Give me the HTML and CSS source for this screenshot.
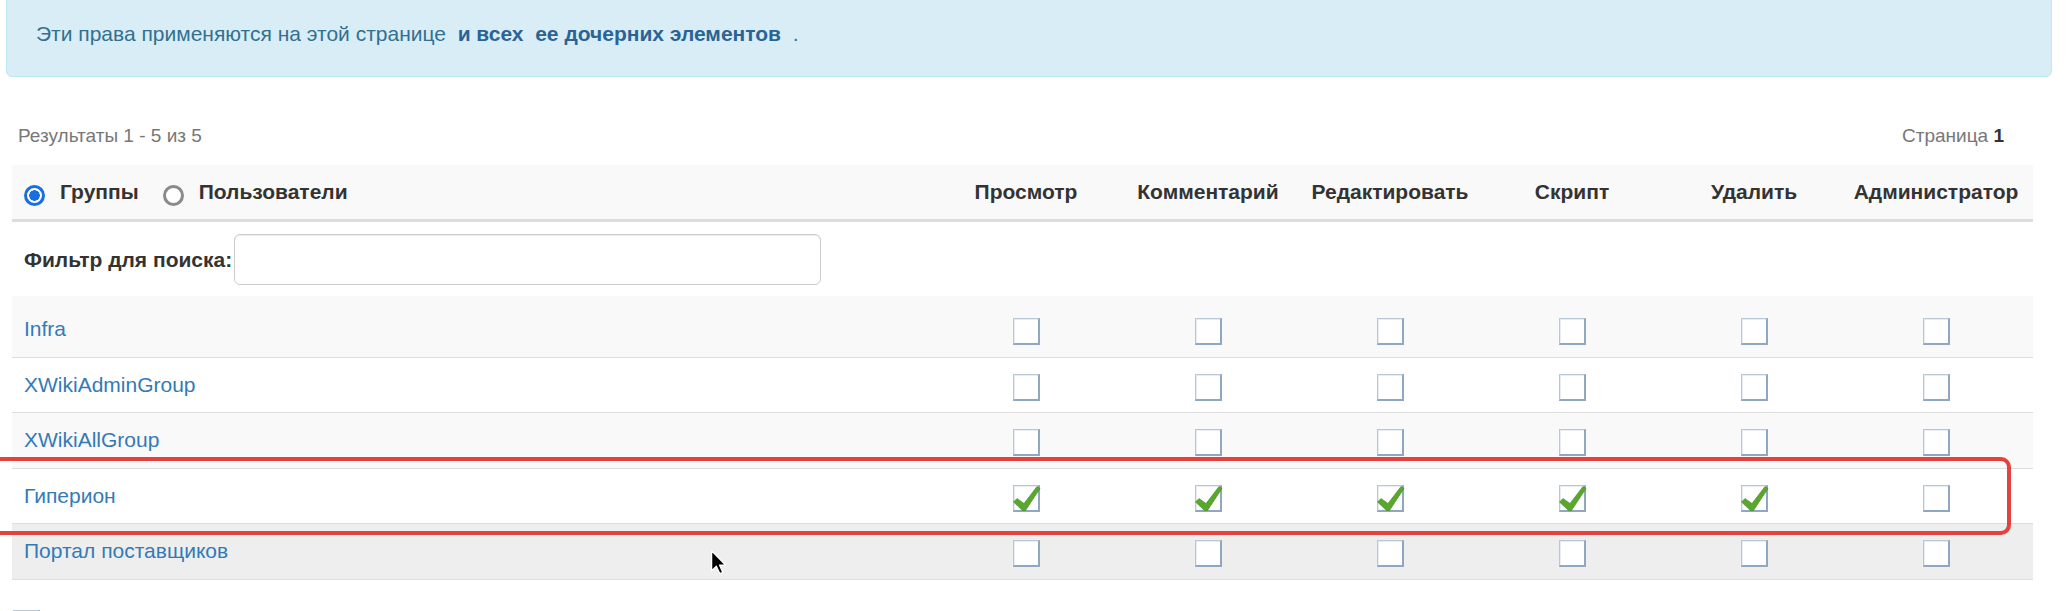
FILE: index.html
```html
<!DOCTYPE html>
<html>

	<head>
		<meta charset="UTF-8">
		<title>Права</title>
		<link rel="stylesheet" href="styles.css">
	</head>

	<body>
		<div class="alert">
			Эти права применяются на этой странице&nbsp; <b>и всех&nbsp; ее дочерних элементов</b>&nbsp; .
		</div>

		<div class="results">
			<span>Результаты 1 - 5 из 5</span>
			<span>Страница <b>1</b></span>
		</div>

		<div class="rights">
			<div class="row head">
				<div class="cell scope">
					<span class="radio on"></span><span class="scope-name">Группы</span><span class="radio"></span><span class="scope-name">Пользователи</span>
				</div>
				<div class="cell title">Просмотр</div>
				<div class="cell title">Комментарий</div>
				<div class="cell title">Редактировать</div>
				<div class="cell title">Скрипт</div>
				<div class="cell title">Удалить</div>
				<div class="cell title">Администратор</div>
			</div>

			<div class="filter">
				<label>Фильтр для поиска:</label>
				<input type="text">
			</div>

			<div class="row odd first">
				<div class="cell name"><a href="#">Infra</a></div>
				<div class="cell box"><span class="check"></span></div>
				<div class="cell box"><span class="check"></span></div>
				<div class="cell box"><span class="check"></span></div>
				<div class="cell box"><span class="check"></span></div>
				<div class="cell box"><span class="check"></span></div>
				<div class="cell box"><span class="check"></span></div>
			</div>

			<div class="row">
				<div class="cell name"><a href="#">XWikiAdminGroup</a></div>
				<div class="cell box"><span class="check"></span></div>
				<div class="cell box"><span class="check"></span></div>
				<div class="cell box"><span class="check"></span></div>
				<div class="cell box"><span class="check"></span></div>
				<div class="cell box"><span class="check"></span></div>
				<div class="cell box"><span class="check"></span></div>
			</div>

			<div class="row odd">
				<div class="cell name"><a href="#">XWikiAllGroup</a></div>
				<div class="cell box"><span class="check"></span></div>
				<div class="cell box"><span class="check"></span></div>
				<div class="cell box"><span class="check"></span></div>
				<div class="cell box"><span class="check"></span></div>
				<div class="cell box"><span class="check"></span></div>
				<div class="cell box"><span class="check"></span></div>
			</div>

			<div class="row">
				<div class="cell name"><a href="#">Гиперион</a></div>
				<div class="cell box"><span class="check"><svg class="tick" viewBox="0 0 27 27"><path d="M0.5 17 L4 13.5 L11 18.5 L24 1.5 L27 3.5 L12.5 25.5 L9.5 25.5 Z"/></svg></span></div>
				<div class="cell box"><span class="check"><svg class="tick" viewBox="0 0 27 27"><path d="M0.5 17 L4 13.5 L11 18.5 L24 1.5 L27 3.5 L12.5 25.5 L9.5 25.5 Z"/></svg></span></div>
				<div class="cell box"><span class="check"><svg class="tick" viewBox="0 0 27 27"><path d="M0.5 17 L4 13.5 L11 18.5 L24 1.5 L27 3.5 L12.5 25.5 L9.5 25.5 Z"/></svg></span></div>
				<div class="cell box"><span class="check"><svg class="tick" viewBox="0 0 27 27"><path d="M0.5 17 L4 13.5 L11 18.5 L24 1.5 L27 3.5 L12.5 25.5 L9.5 25.5 Z"/></svg></span></div>
				<div class="cell box"><span class="check"><svg class="tick" viewBox="0 0 27 27"><path d="M0.5 17 L4 13.5 L11 18.5 L24 1.5 L27 3.5 L12.5 25.5 L9.5 25.5 Z"/></svg></span></div>
				<div class="cell box"><span class="check"></span></div>
			</div>

			<div class="row hover last">
				<div class="cell name"><a href="#">Портал поставщиков</a></div>
				<div class="cell box"><span class="check"></span></div>
				<div class="cell box"><span class="check"></span></div>
				<div class="cell box"><span class="check"></span></div>
				<div class="cell box"><span class="check"></span></div>
				<div class="cell box"><span class="check"></span></div>
				<div class="cell box"><span class="check"></span></div>
			</div>
		</div>

		<div class="foot"><span class="check"></span></div>

		<!-- red marker round the row -->
		<div class="marker"></div>

		<svg class="cursor" viewBox="0 0 12 19" width="15" height="24">
			<path d="M0.5 0.5 V16.5 L4.3 12.9 L7 18.8 L9.4 17.8 L6.8 11.9 H11.6 Z"/>
		</svg>
	</body>

</html>
```

FILE: styles.css
```css
* {
	margin: 0;
	padding: 0;
	box-sizing: border-box;
}

body {
	position: relative;
	width: 2067px;
	height: 611px;
	overflow: hidden;
	font-family: "Liberation Sans", Arial, sans-serif;
	font-size: 21px;
	line-height: 30px;
	color: #333;
	background: #fff;
}

a {
	color: #337ab7;
	text-decoration: none;
}

.alert {
	margin: -4px 15px 0 6px;
	padding: 22px 29px 27px;
	background: #d9edf7;
	border: 1px solid #bce8f1;
	border-radius: 6px;
	color: #31708f;
}

.alert b {
	color: #2a6496;
}

.results {
	display: flex;
	justify-content: space-between;
	margin: 45px 63px 16px 18px;
	font-size: 19px;
	line-height: 27px;
	color: #777;
}

.results b {
	color: #333;
}

.rights {
	margin: 0 34px 0 12px;
}

.row {
	display: grid;
	grid-template-columns: 1fr repeat(6, 182px);
	padding-right: 6px;
	border-top: 1px solid #ddd;
}

.row.odd {
	background: #f9f9f9;
}

.row.hover {
	background: #eee;
}

.row.first {
	border-top: 1px solid #f9f9f9;
	padding-top: 5px;
}

.row.last {
	border-bottom: 1px solid #ddd;
}

.cell {
	padding: 12px 12px 12.5px;
}

.cell.box {
	display: flex;
	justify-content: center;
	align-items: flex-start;
	padding: 16px 0 0;
}

.row.head {
	border-top: 0;
	background: #f9f9f9;
	border-bottom: 3px solid #ddd;
}

.row.head .cell {
	padding: 12px 0;
	font-weight: bold;
	white-space: nowrap;
}

.row.head .scope {
	padding-left: 12px;
}

.row.head .title {
	text-align: center;
}

.radio {
	display: inline-block;
	width: 21px;
	height: 21px;
	margin-right: 15px;
	vertical-align: -7px;
	border: 3px solid #8a8a8a;
	border-radius: 50%;
	background: #fff;
}

.radio.on {
	border: 3px solid #1a6fe0;
	background: radial-gradient(circle, #1a6fe0 0 5px, #fff 5.5px);
}

.scope-name {
	margin-right: 24px;
}

.filter {
	display: flex;
	align-items: center;
	padding: 12px 12px 11px;
}

.filter label {
	font-weight: bold;
	margin-right: 2px;
}

.filter input {
	width: 587px;
	height: 51px;
	border: 1px solid #ccc;
	border-radius: 6px;
	box-shadow: inset 0 1px 1px rgba(0, 0, 0, 0.075);
	background: #fff;
}

.check {
	position: relative;
	display: block;
	width: 27px;
	height: 27px;
	background: #fff;
	border-top: 1px solid #b9c6d4;
	border-left: 1px solid #b9c6d4;
	border-right: 2px solid #8fa7c0;
	border-bottom: 2px solid #8fa7c0;
	box-shadow: inset 1px 1px 0 #e8edf3;
}

.tick {
	position: absolute;
	left: -1px;
	top: -1px;
	width: 27px;
	height: 27px;
	overflow: visible;
	fill: #59a82d;
	stroke: #3f8a1c;
	stroke-width: 0.6;
}

.foot {
	margin: 30px 0 0 13px;
}

.marker {
	position: absolute;
	left: -20px;
	top: 457px;
	width: 2031px;
	height: 78px;
	border: 4px solid #e5413f;
	border-radius: 10px;
}

.cursor {
	position: absolute;
	left: 711px;
	top: 550px;
	fill: #000;
	stroke: #fff;
	stroke-width: 1;
	stroke-linejoin: round;
}
```
